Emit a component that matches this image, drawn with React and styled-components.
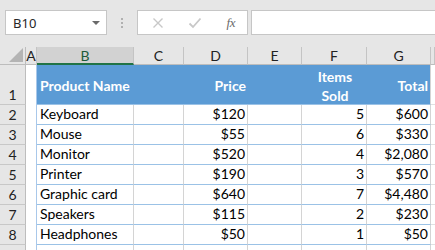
import React from "react";
import styled, { createGlobalStyle } from "styled-components";

const GlobalStyle = createGlobalStyle`
  html, body {
    margin: 0;
    padding: 0;
    width: 435px;
    height: 250px;
    overflow: hidden;
    background: #e6e6e6;
  }
  * { box-sizing: border-box; }
`;

const rows = [
  ["Keyboard", "$120", "5", "$600"],
  ["Mouse", "$55", "6", "$330"],
  ["Monitor", "$520", "4", "$2,080"],
  ["Printer", "$190", "3", "$570"],
  ["Graphic card", "$640", "7", "$4,480"],
  ["Speakers", "$115", "2", "$230"],
  ["Headphones", "$50", "1", "$50"],
];

const columns = ["A", "B", "C", "D", "E", "F", "G", ""];
const widths = "26px 11px 97px 50px 64px 54px 65px 64px 1fr";

const App = () => (
  <Page>
    <GlobalStyle />
    <Toolbar>
      <NameBox>
        <span>B10</span>
        <Caret />
      </NameBox>
      <Dots>
        <i /><i /><i />
      </Dots>
      <ButtonBox>
        <svg width="12" height="12" viewBox="0 0 12 12">
          <path d="M1.5 1.5 L10.5 10.5 M10.5 1.5 L1.5 10.5" stroke="#c8c8c8" strokeWidth="1.4" fill="none" />
        </svg>
        <svg width="14" height="12" viewBox="0 0 14 12">
          <path d="M1.5 6.5 L5 10 L12.5 1.5" stroke="#c8c8c8" strokeWidth="1.8" fill="none" />
        </svg>
        <Fx>fx</Fx>
      </ButtonBox>
      <Formula />
    </Toolbar>

    <Sheet>
      <Corner>
        <svg width="14" height="14" viewBox="0 0 14 14">
          <path d="M14 0 L14 14 L0 14 Z" fill="#b4b4b4" />
        </svg>
      </Corner>
      {columns.map((c, i) => (
        <ColHead key={i} $active={c === "B"}>{c}</ColHead>
      ))}

      <RowHead>1</RowHead>
      <Blank />
      <HeadCell>Product Name</HeadCell>
      <HeadCell />
      <HeadCell $right>Price</HeadCell>
      <HeadCell />
      <HeadCell $center>Items<br />Sold</HeadCell>
      <HeadCell $right $last>Total</HeadCell>
      <Outside />

      {rows.map((r, i) => (
        <React.Fragment key={r[0]}>
          <RowHead>{i + 2}</RowHead>
          <Blank />
          <Cell>{r[0]}</Cell>
          <Cell />
          <Cell $right>{r[1]}</Cell>
          <Cell />
          <Cell $right>{r[2]}</Cell>
          <Cell $right>{r[3]}</Cell>
          <Outside />
        </React.Fragment>
      ))}

      <RowHead />
      <Blank />
      <Cell />
      <Cell />
      <Cell />
      <Cell />
      <Cell />
      <Cell />
      <Outside />
    </Sheet>
  </Page>
);

export default App;

const Page = styled.div`
  width: 435px;
  height: 250px;
  overflow: hidden;
  background: #e6e6e6;
  font-family: Lato, "Liberation Sans", sans-serif;
`;

const Toolbar = styled.div`
  height: 47px;
  display: flex;
  align-items: flex-start;
  padding: 10px 0 0 5px;
`;

const NameBox = styled.div`
  width: 102px;
  height: 25px;
  background: #fff;
  border: 1px solid #c6c6c6;
  display: flex;
  align-items: center;
  justify-content: space-between;
  padding: 0 6px 0 7px;
  font-family: "Noto Sans", "Open Sans", sans-serif;
  font-size: 13px;
  color: #262626;
`;

const Caret = styled.span`
  width: 0;
  height: 0;
  border-left: 4px solid transparent;
  border-right: 4px solid transparent;
  border-top: 4px solid #6a6a6a;
`;

const Dots = styled.div`
  width: 30px;
  height: 25px;
  display: flex;
  flex-direction: column;
  align-items: center;
  justify-content: center;
  gap: 2px;

  i {
    width: 2px;
    height: 2px;
    background: #b0b0b0;
  }
`;

const ButtonBox = styled.div`
  width: 111px;
  height: 25px;
  background: #fff;
  border: 1px solid #c6c6c6;
  display: flex;
  align-items: center;
  justify-content: space-between;
  padding: 0 12px 0 14px;
`;

const Fx = styled.span`
  font-family: "Liberation Serif", "DejaVu Serif", serif;
  font-style: italic;
  font-size: 13px;
  color: #6a6a6a;
  letter-spacing: -0.5px;
`;

const Formula = styled.div`
  flex: 1;
  height: 25px;
  margin-left: 3px;
  background: #fff;
  border: 1px solid #c6c6c6;
  border-right: none;
`;

const Sheet = styled.div`
  display: grid;
  grid-template-columns: ${widths};
  grid-template-rows: 18px 40px repeat(8, 20px);
  background: #fff;
`;

const Corner = styled.div`
  background: #e6e6e6;
  border-right: 1px solid #bdbdbd;
  border-bottom: 1px solid #bdbdbd;
  display: flex;
  align-items: flex-end;
  justify-content: flex-end;
  padding: 0 2px 2px 0;
`;

const ColHead = styled.div`
  background: ${({ $active }) => ($active ? "#d2d2d2" : "#e6e6e6")};
  border-right: 1px solid #c4c4c4;
  border-bottom: ${({ $active }) => ($active ? "2px solid #217346" : "1px solid #bdbdbd")};
  display: flex;
  align-items: center;
  justify-content: center;
  font-size: 14px;
  color: ${({ $active }) => ($active ? "#1e5b3a" : "#222")};
`;

const RowHead = styled.div`
  background: #e6e6e6;
  border-right: 1px solid #bdbdbd;
  border-bottom: 1px solid #c8c8c8;
  display: flex;
  align-items: flex-end;
  justify-content: center;
  padding-bottom: 1px;
  font-size: 14px;
  color: #222;
`;

const Blank = styled.div`
  background: #fff;
  border-right: 1px solid #a9c8ea;
`;

const HeadCell = styled.div`
  background: #5b9bd5;
  border-bottom: 1px solid #9bc2e6;
  ${({ $last }) => $last && "border-right: 1px solid #d4d4d4;"}
  display: flex;
  align-items: center;
  justify-content: ${({ $right, $center }) => ($right ? "flex-end" : $center ? "center" : "flex-start")};
  text-align: ${({ $center }) => ($center ? "center" : "left")};
  padding: 2px 2px 0 3px;
  color: #fff;
  font-weight: 700;
  font-size: 14px;
  line-height: 19px;
  white-space: nowrap;
`;

const Cell = styled.div`
  border-right: 1px solid #d4d4d4;
  border-bottom: 1px solid #9bc2e6;
  display: flex;
  align-items: flex-end;
  justify-content: ${({ $right }) => ($right ? "flex-end" : "flex-start")};
  padding: 0 2px 1px 3px;
  font-size: 14px;
  line-height: 18px;
  color: #000;
  white-space: nowrap;
`;

const Outside = styled.div`
  border-bottom: 1px solid #e1e1e1;
`;
